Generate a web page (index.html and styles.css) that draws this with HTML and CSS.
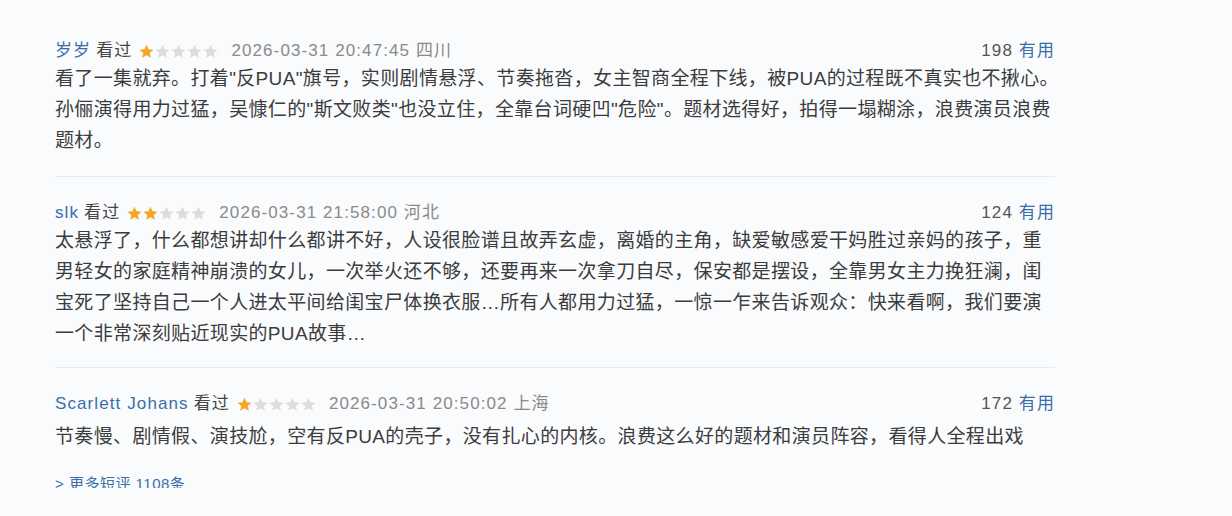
FILE: index.html
```html
<!DOCTYPE html>
<html lang="zh-CN">
<head>
<meta charset="utf-8">
<title>短评</title>
<link rel="stylesheet" href="styles.css">
</head>
<body>
<svg width="0" height="0" class="defs">
  <defs>
    <polygon id="star" points="7,0.6 8.9,4.9 13.5,5.3 10,8.3 11.1,12.9 7,10.5 2.9,12.9 4,8.3 0.5,5.3 5.1,4.9"/>
  </defs>
</svg>
<div class="list">
  <div class="review">
    <div class="meta">
      <div class="info">
        <span class="user">岁岁</span>
        <span class="status">看过</span>
        <span class="stars">
          <svg class="on" viewBox="0 0 14 14"><use href="#star"/></svg><svg viewBox="0 0 14 14"><use href="#star"/></svg><svg viewBox="0 0 14 14"><use href="#star"/></svg><svg viewBox="0 0 14 14"><use href="#star"/></svg><svg viewBox="0 0 14 14"><use href="#star"/></svg>
        </span>
        <span class="time">2026-03-31 20:47:45 四川</span>
      </div>
      <div class="votes"><span class="count">198</span> <span class="useful">有用</span></div>
    </div>
    <p class="text">看了一集就弃。打着"反PUA"旗号，实则剧情悬浮、节奏拖沓，女主智商全程下线，被PUA的过程既不真实也不揪心。孙俪演得用力过猛，吴慷仁的"斯文败类"也没立住，全靠台词硬凹"危险"。题材选得好，拍得一塌糊涂，浪费演员浪费题材。</p>
  </div>
  <div class="review">
    <div class="meta">
      <div class="info">
        <span class="user">slk</span>
        <span class="status">看过</span>
        <span class="stars">
          <svg class="on" viewBox="0 0 14 14"><use href="#star"/></svg><svg class="on" viewBox="0 0 14 14"><use href="#star"/></svg><svg viewBox="0 0 14 14"><use href="#star"/></svg><svg viewBox="0 0 14 14"><use href="#star"/></svg><svg viewBox="0 0 14 14"><use href="#star"/></svg>
        </span>
        <span class="time">2026-03-31 21:58:00 河北</span>
      </div>
      <div class="votes"><span class="count">124</span> <span class="useful">有用</span></div>
    </div>
    <p class="text">太悬浮了，什么都想讲却什么都讲不好，人设很脸谱且故弄玄虚，离婚的主角，缺爱敏感爱干妈胜过亲妈的孩子，重男轻女的家庭精神崩溃的女儿，一次举火还不够，还要再来一次拿刀自尽，保安都是摆设，全靠男女主力挽狂澜，闺宝死了坚持自己一个人进太平间给闺宝尸体换衣服…所有人都用力过猛，一惊一乍来告诉观众：快来看啊，我们要演一个非常深刻贴近现实的PUA故事…</p>
  </div>
  <div class="review last">
    <div class="meta">
      <div class="info">
        <span class="user">Scarlett Johans</span>
        <span class="status">看过</span>
        <span class="stars">
          <svg class="on" viewBox="0 0 14 14"><use href="#star"/></svg><svg viewBox="0 0 14 14"><use href="#star"/></svg><svg viewBox="0 0 14 14"><use href="#star"/></svg><svg viewBox="0 0 14 14"><use href="#star"/></svg><svg viewBox="0 0 14 14"><use href="#star"/></svg>
        </span>
        <span class="time">2026-03-31 20:50:02 上海</span>
      </div>
      <div class="votes"><span class="count">172</span> <span class="useful">有用</span></div>
    </div>
    <p class="text">节奏慢、剧情假、演技尬，空有反PUA的壳子，没有扎心的内核。浪费这么好的题材和演员阵容，看得人全程出戏</p>
  </div>
  <div class="more-clip">
    <a class="more" href="#">&gt; 更多短评 1108条</a>
  </div>
</div>
</body>
</html>
```
FILE: styles.css
```css
html, body {
  margin: 0;
  padding: 0;
  background: #f9fbfd;
}
body {
  font-family: "Liberation Sans", "Noto Sans CJK SC", sans-serif;
  color: #333;
  width: 1232px;
  height: 516px;
  overflow: hidden;
}
.defs {
  position: absolute;
}
.list {
  width: 1000px;
  padding: 39px 0 0 55px;
}
.review {
  border-bottom: 1px solid #e6ebf0;
  padding-bottom: 20px;
  margin-bottom: 24px;
}
.review:nth-child(2) {
  padding-bottom: 18px;
  margin-bottom: 24px;
}
.review.last {
  border-bottom: none;
  padding-bottom: 0;
  margin-bottom: 24px;
}
.review.last .text {
  margin-top: 5px;
}
.meta {
  display: flex;
  justify-content: space-between;
  align-items: center;
  height: 24px;
  font-size: 17px;
  line-height: 24px;
  letter-spacing: 1.1px;
}
.info {
  display: flex;
  align-items: center;
  gap: 5px;
}
.user {
  color: #3a6ea8;
}
.status {
  color: #444;
}
.stars {
  display: flex;
  gap: 1px;
  margin: 0 8px 0 2px;
}
.stars svg {
  width: 15px;
  height: 15px;
  fill: #dcdcdc;
}
.stars svg.on {
  fill: #f5a623;
}
.time {
  color: #8a8a8a;
}
.votes {
  color: #555;
}
.useful {
  color: #3a6ea8;
}
.text {
  width: 1005px;
  margin: 0;
  font-size: 19px;
  line-height: 31px;
  letter-spacing: 0.35px;
  color: #3c3c3c;
}
.more-clip {
  height: 12px;
  overflow: hidden;
}
.more {
  display: block;
  color: #3a6ea8;
  text-decoration: none;
  font-size: 15px;
  line-height: 16px;
  letter-spacing: 0.5px;
}
```
